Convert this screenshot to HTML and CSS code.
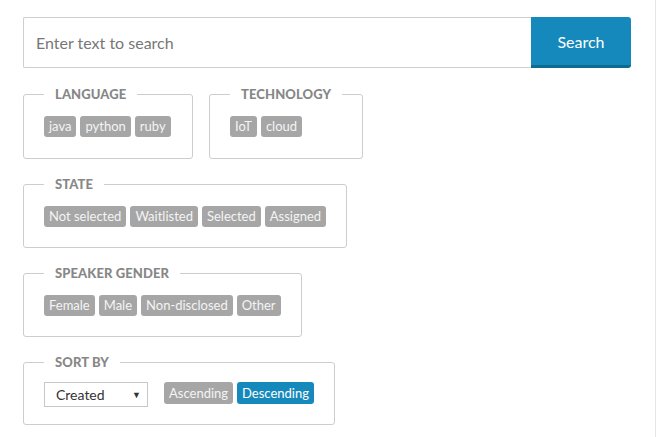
FILE: index.html
```html
<!DOCTYPE html>
<html>
<head>
<meta charset="utf-8">
<link rel="stylesheet" href="styles.css">
</head>
<body>
<div class="page">
  <form class="search">
    <input class="search-input" type="text" placeholder="Enter text to search">
    <button class="search-btn" type="button">Search</button>
  </form>

  <div class="row row-top">
    <fieldset class="group w-lang">
      <legend>LANGUAGE</legend>
      <div class="tags">
        <span class="tag">java</span><span class="tag">python</span><span class="tag">ruby</span>
      </div>
    </fieldset>
    <fieldset class="group w-tech">
      <legend>TECHNOLOGY</legend>
      <div class="tags">
        <span class="tag">IoT</span><span class="tag">cloud</span>
      </div>
    </fieldset>
  </div>

  <div class="row">
    <fieldset class="group w-state">
      <legend>STATE</legend>
      <div class="tags">
        <span class="tag">Not selected</span><span class="tag">Waitlisted</span><span class="tag">Selected</span><span class="tag">Assigned</span>
      </div>
    </fieldset>
  </div>

  <div class="row">
    <fieldset class="group w-gender">
      <legend>SPEAKER GENDER</legend>
      <div class="tags">
        <span class="tag">Female</span><span class="tag">Male</span><span class="tag">Non-disclosed</span><span class="tag">Other</span>
      </div>
    </fieldset>
  </div>

  <div class="row">
    <fieldset class="group w-sort">
      <legend>SORT BY</legend>
      <div class="sort">
        <div class="select"><span>Created</span><span class="arrow">&#9660;</span></div>
        <div class="tags">
          <span class="tag tag-btn">Ascending</span><span class="tag tag-btn active">Descending</span>
        </div>
      </div>
    </fieldset>
  </div>
</div>
</body>
</html>
```
FILE: styles.css
```css
html, body {
  margin: 0;
  padding: 0;
  background: #fff;
}
body {
  font-family: Lato, "Open Sans", "Liberation Sans", sans-serif;
  color: #333;
}
.page {
  width: 656px;
  height: 437px;
  box-sizing: border-box;
  padding: 17px 0 0 23px;
  border-right: 1px solid #e6e6e6;
}
.search {
  display: flex;
  width: 608px;
  height: 51px;
  margin: 0 0 19px 0;
}
.search-input {
  flex: 1;
  box-sizing: border-box;
  height: 51px;
  border: 1px solid #cfcfcf;
  border-right: none;
  border-radius: 2px 0 0 2px;
  padding: 0 12px;
  font-family: inherit;
  font-size: 16px;
  color: #333;
  outline: none;
}
.search-input::placeholder {
  color: #777;
}
.search-btn {
  width: 100px;
  height: 51px;
  box-sizing: border-box;
  border: none;
  border-radius: 0 3px 3px 0;
  background: #1589bb;
  border-bottom: 3px solid #0f6a91;
  color: #fff;
  font-family: inherit;
  font-size: 16px;
  padding: 0;
}
.row {
  display: flex;
  gap: 16px;
  margin-bottom: 18px;
}
.group {
  margin: 0;
  padding: 0 20px 20px 20px;
  border: 1px solid #cdcdcd;
  border-radius: 3px;
  box-sizing: border-box;
}
.row-top .group {
  padding-bottom: 21px;
}
.group legend {
  padding: 0 11px;
  font-size: 13px;
  font-weight: 900;
  color: #878787;
  letter-spacing: 0.1px;
  line-height: 14px;
  margin-bottom: 15px;
}
.w-lang { width: 170px; }
.w-tech { width: 153px; }
.w-state { width: 324px; }
.w-gender { width: 279px; }
.w-sort { width: 311px; }
.tags {
  display: flex;
  gap: 4px;
}
.tag {
  display: inline-block;
  white-space: nowrap;
  background: #a6a6a6;
  color: #f4f4f4;
  font-size: 13px;
  line-height: 21px;
  height: 21px;
  padding: 0 5px;
  border-radius: 3px;
}
.sort {
  display: flex;
  align-items: flex-start;
  gap: 16px;
  margin-top: -2px;
  margin-bottom: -3px;
}
.select {
  width: 104px;
  height: 25px;
  box-sizing: border-box;
  border: 1px solid #c8c8c8;
  display: flex;
  align-items: center;
  justify-content: space-between;
  padding: 0 6px 0 11px;
  font-size: 14px;
  color: #333;
}
.arrow {
  font-size: 9px;
  color: #333;
}
.tag-btn {
  height: 22px;
  line-height: 22px;
  padding: 0 5px;
}
.tag-btn.active {
  background: #1589bb;
  color: #fff;
}
```
